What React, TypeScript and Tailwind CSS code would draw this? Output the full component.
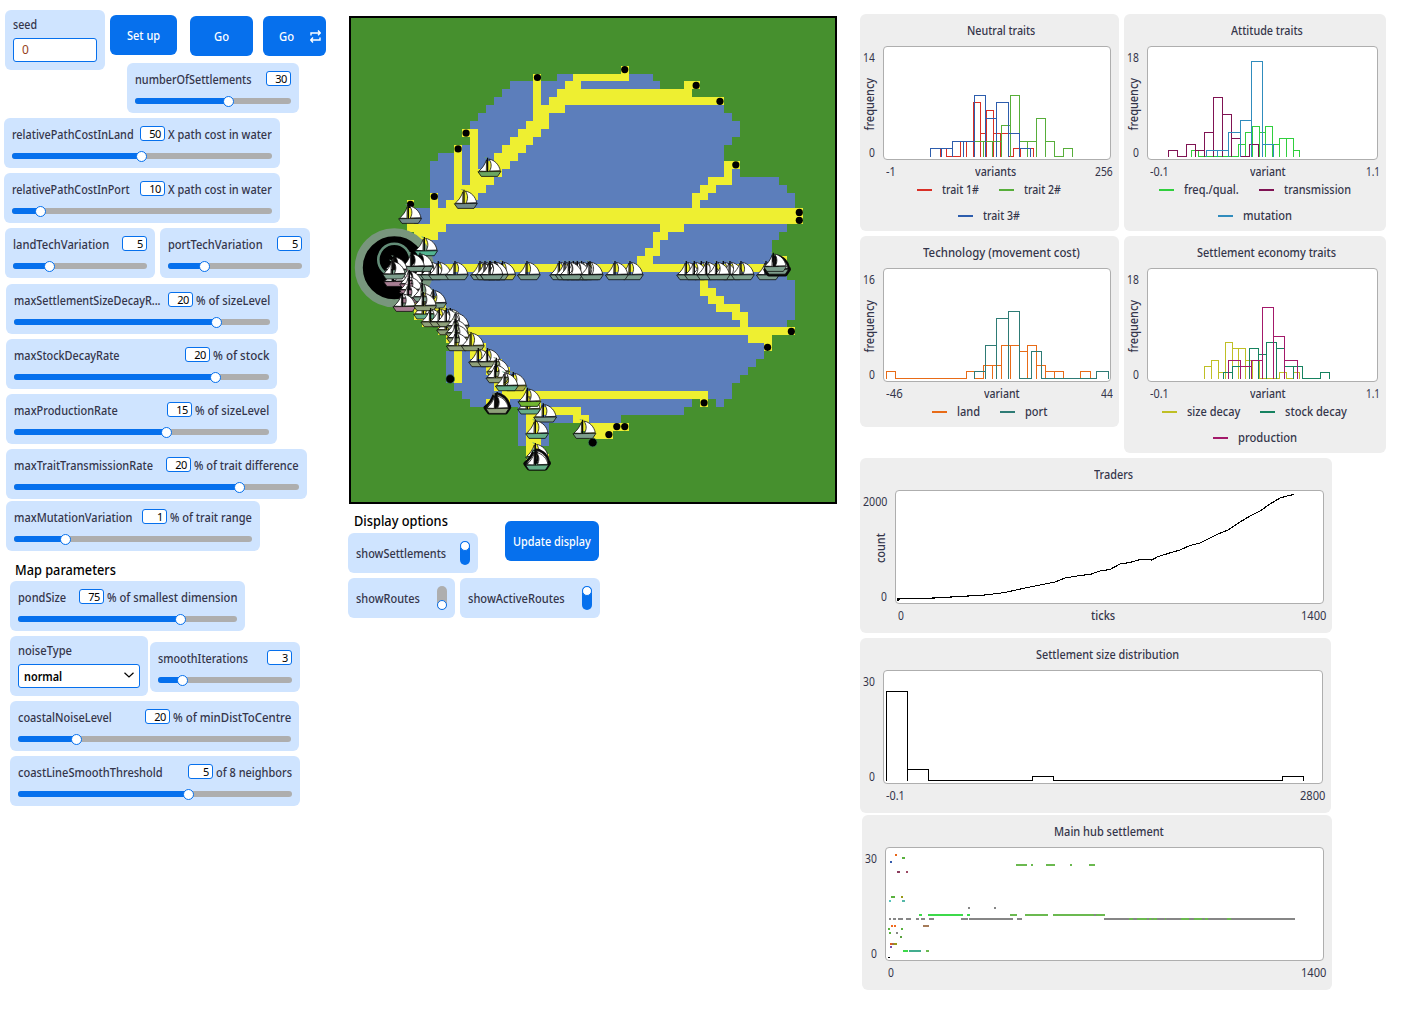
import { useLayoutEffect, useRef, type ReactNode } from "react";

/** Text stretched or squeezed horizontally so that it occupies a known width. */
function Fit({ w, children }: { w: number; children: string }) {
  const ref = useRef<HTMLSpanElement>(null);
  useLayoutEffect(() => {
    const el = ref.current!;
    el.style.transform = `scaleX(${w / el.offsetWidth})`;
  }, [w]);
  return (
    <span className="inline-block shrink-0 whitespace-nowrap" style={{ width: w }}>
      <span ref={ref} className="inline-block origin-left whitespace-nowrap">
        {children}
      </span>
    </span>
  );
}

function Slider(p: { box: string; label: string; lw: number; value: string; unit?: string; uw?: number; knob: number }) {
  return (
    <div className={`h-[50px] shrink-0 rounded-md bg-[#cfe4ff] px-2 pt-2 ${p.box}`}>
      <div className="flex h-[17px] items-start justify-between">
        <span className="pt-px"><Fit w={p.lw}>{p.label}</Fit></span>
        <div className="flex items-start gap-[3px]">
          <span className="h-[15px] w-[25px] shrink-0 rounded-[3px] border border-[#0670ed] bg-white pr-[3px] text-right text-[11px] leading-[14px] font-normal tracking-[-0.4px] text-black">
            {p.value}
          </span>
          {p.unit && <span className="pt-px"><Fit w={p.uw!}>{p.unit}</Fit></span>}
        </div>
      </div>
      <div className="relative mt-[10px] h-[6px] rounded-full bg-[#aeaeae]">
        <div className="h-full rounded-full bg-[#0670ed]" style={{ width: p.knob }} />
        <div className="absolute -top-[2px] size-[11px] rounded-full border border-[#0670ed] bg-white" style={{ left: p.knob - 6 }} />
      </div>
    </div>
  );
}

function Switch({ box, label, lw, on }: { box: string; label: string; lw: number; on: boolean }) {
  return (
    <div className={`flex h-10 items-center justify-between rounded-md bg-[#cfe4ff] px-2 ${box}`}>
      <span className="pt-[2px]"><Fit w={lw}>{label}</Fit></span>
      <span className={`flex h-6 w-[10px] rounded-full ${on ? "items-start bg-[#0670ed]" : "items-end bg-[#aeaeae]"}`}>
        <span className="size-[10px] rounded-full border border-[#0670ed] bg-white" />
      </span>
    </div>
  );
}

const button = "flex h-10 shrink-0 items-center justify-center rounded-md bg-[#0670ed] pt-[2px] text-white";

type Span = [row: number, from: number, to: number];
const water: Span[] = [
  [7, 26, 38], [8, 20, 39], [9, 19, 43], [10, 18, 47], [11, 17, 47], [12, 16, 48], [13, 15, 49], [14, 15, 49], [15, 15, 48],
  [16, 13, 47], [17, 11, 47], [18, 10, 47], [19, 10, 49], [20, 10, 54], [21, 10, 55], [22, 10, 56], [23, 10, 56],
  [24, 8, 57], [25, 8, 56], [26, 8, 55], [27, 8, 54], [28, 9, 53], [29, 9, 53], [30, 8, 53], [31, 8, 54], [32, 8, 55],
  [33, 8, 56], [34, 8, 56], [35, 8, 56], [36, 8, 56], [37, 9, 56], [38, 10, 55], [39, 12, 55], [40, 13, 53], [41, 13, 52],
  [42, 12, 52], [43, 12, 51], [44, 12, 50], [45, 12, 49], [46, 13, 48], [47, 14, 48], [48, 15, 43], [48, 46, 47],
  [49, 21, 42], [50, 21, 34], [51, 21, 25], [52, 21, 25], [53, 21, 25],
];
const routes: Span[] = [
  [6, 34, 35], [7, 23, 24], [7, 28, 35], [8, 23, 24], [8, 27, 29], [8, 42, 44], [9, 23, 24], [9, 26, 43], [10, 23, 24], [10, 25, 47],
  [11, 23, 27], [12, 23, 25], [13, 22, 25], [14, 14, 16], [14, 21, 24], [15, 15, 16], [15, 20, 23],
  [16, 13, 14], [16, 15, 16], [16, 19, 22], [17, 13, 14], [17, 15, 16], [17, 18, 21], [18, 13, 14], [18, 15, 16], [18, 17, 20],
  [18, 47, 49], [19, 13, 14], [19, 15, 19], [19, 47, 48], [20, 13, 14], [20, 15, 18], [20, 45, 48], [21, 13, 17], [21, 44, 46],
  [22, 10, 11], [22, 13, 16], [22, 43, 45], [23, 7, 8], [23, 10, 11], [23, 12, 15], [23, 43, 44],
  [24, 7, 8], [24, 10, 57], [25, 7, 8], [25, 10, 57], [26, 7, 12], [26, 39, 42], [27, 8, 11], [27, 38, 40], [28, 8, 10], [28, 38, 39], [29, 8, 9],
  [29, 37, 39], [30, 8, 9], [30, 36, 38], [30, 54, 55], [31, 7, 55], [32, 6, 8], [33, 44, 45], [34, 7, 10], [34, 44, 46], [35, 7, 11], [35, 45, 47], [36, 8, 12],
  [36, 46, 49], [37, 8, 12], [37, 48, 50], [38, 9, 14], [38, 49, 50], [39, 11, 56], [40, 12, 16], [40, 50, 53], [41, 13, 17], [41, 52, 53],
  [42, 13, 14], [42, 15, 18], [43, 13, 14], [43, 17, 19], [44, 13, 14], [44, 17, 20], [45, 13, 14], [45, 18, 21], [46, 18, 22],
  [47, 19, 45], [48, 17, 20], [48, 22, 24], [48, 44, 45], [49, 22, 29], [50, 22, 24], [50, 28, 30], [51, 22, 24], [51, 29, 35], [52, 22, 24], [52, 30, 33],
  [53, 22, 24], [54, 22, 24], [55, 22, 25],
];
const settlements: [number, number][] = [
  [23, 7], [34, 6], [43, 8], [46, 10], [14, 14], [13, 16], [10, 22], [7, 23], [48, 18], [56, 24], [56, 25],
  [55, 39], [52, 41], [44, 48], [33, 51], [34, 51], [32, 52],
];
const G = "#7d9e8c", T = "#65ad88", P = "#a87e93", O = "#8fa07a", S = "#70898a";
type BoatAt = [x: number, y: number, hull: string, outline?: number];
/** Boats moored almost on top of one another, read as one boat with a heavy outline. */
const moored = (x: number, y: number, hull: string): BoatAt[] => [[x, y, "#080808", 14], [x, y, hull]];
const boats: BoatAt[] = [
  [489.3, 176.7, "#6aa65f"], [465.7, 208.7, S], [410, 223.7, S], [426, 256, "#53b592"],
  ...[425, 432, 440, 456.7, 481.7, 486.7, 491.7, 496.7].map((x): BoatAt => [x, 280, G]),
  [504.3, 280, "#bfc64a"], [496.7, 280, G], [491.7, 280, G], [528.7, 280, G],
  ...[561, 566.7, 575, 583.3, 590, 579, 571, 591.7, 631.7, 616.7, 688, 703, 696, 708.3, 725, 731.7, 718.3, 742.7, 767.7].map((x): BoatAt => [x, 280, G]),
  [421.7, 271.7, G], [413.3, 271.7, G], [402, 286, P], [395, 286.7, P], [396, 275, G], [394, 279.3, G],
  [411, 289, P], [411, 295, P], [410, 303.3, P], [404.3, 311.7, P],
  [425, 319.3, T], [424, 302, G], [435, 308.3, G], [425, 311, O],
  [448, 335, O], [452, 327, O], [432.3, 327, O], [441, 327, O], [448, 327, O],
  [457.7, 331, O], [457, 338, O], [458, 343, O], [457.7, 351, O], [472.7, 351, O],
  [480, 367, O], [489.3, 367, O], [498, 376.7, O], [497.3, 383, O], [515, 391, "#a5a94b"], [506.7, 391, T],
  [499, 411, O], ...moored(497.3, 412.5, O), [497.3, 413.7, O],
  [529, 414.3, T], [529.3, 406.7, "#70b531"], [545, 422.3, G], [537, 438.7, T],
  [537, 462, T], ...moored(537, 468.500, T), [537, 470.3, T], [584.3, 438.7, G],
  ...moored(777, 274.500, G), [775, 271.700, G],
];

function Boat({ x, y, hull, outline = 2.3 }: { x: number; y: number; hull: string; outline?: number }) {
  return (
    <g transform={`translate(${x - 11.7} ${y - 20.3}) scale(.3333)`} stroke="#080808" strokeWidth={outline} strokeLinejoin="round">
      <path d="M20 2l8 1-2 4z" fill={hull} stroke="none" />
      <path d="M27 10C22 24 14 36 4 44L26 45Z" fill="#fff" />
      <path d="M34 8C52 11 65 26 68 43L36 44C43 31 42 19 34 8Z" fill="#fff" />
      <path d="M30 4V48" strokeWidth="4" />
      <path d="M1 46L70 45 60 60H11Z" fill={hull} />
    </g>
  );
}

function WorldView() {
  const u = 484 / 61;
  const cell = ([r, a, b]: Span, i: number) => {
    const x = Math.round(a * u), y = Math.round(r * u);
    return <rect key={i} x={x} y={y} width={Math.round(b * u) - x} height={Math.round((r + 1) * u) - y} />;
  };
  return (
    <svg className="block h-[488px] w-[488px] shrink-0 border-2 border-black bg-[#46902e]" viewBox="0 0 484 484">
      <g fill="#5c7ebb" shapeRendering="crispEdges">{water.map(cell)}</g>
      <g fill="#eeef31" shapeRendering="crispEdges">{routes.map(cell)}</g>
      {settlements.map(([c, r], i) => <circle key={i} cx={(c + 0.5) * u} cy={(r + 0.5) * u} r="3.6" />)}
      {[[99.2, 361], [241.7, 424.5]].map(([x, y]) => <circle key={x} cx={x} cy={y} r="4.4" stroke="#3c7c5c" strokeWidth=".7" />)}
      <circle cx="43.3" cy="249.7" r="35.5" fill="#000" stroke="#78967d" strokeWidth="8" />
      <circle cx="43.3" cy="241.7" r="16" fill="#000" stroke="#638d78" strokeWidth="2.6" />
      <g transform="translate(-351 -18)">{boats.map(([x, y, h, o], i) => <Boat key={i} x={x} y={y} hull={h} outline={o} />)}</g>
    </svg>
  );
}

type Bar = [number, number, number];
/** Outline histogram; every bar is [left, right, top] and stands on a shared base line. */
function Hist({ bars, color }: { bars: Bar[]; color: string }) {
  const d = bars.map(([a, b, t]) => (t >= 438 ? `M${a} 438.5H${b}` : `M${a} 440V${t}H${b}V440`)).join("");
  return <path d={d} stroke={color} fill="none" vectorEffect="non-scaling-stroke" transform="translate(.8 .8)" shapeRendering="crispEdges" />;
}

function Plot(p: {
  box: string; axis: string; plot: string; title: string; tw: number; view: string; yMax: string; yMaxW: number; yLabel?: string; yLabelW?: number;
  xMin: string; xMinW: number; xMax: string; xMaxW: number; xLabel?: string; xLabelW?: number; legend?: [string, number, string][][]; children: ReactNode;
}) {
  return (
    <div className={`shrink-0 rounded-md bg-[#eeeeee] ${p.box}`}>
      <div className="flex h-[163px]">
        <div className={`flex shrink-0 flex-col items-end pt-[36px] pr-2 ${p.axis}`}>
          <span className="font-normal"><Fit w={p.yMaxW}>{p.yMax}</Fit></span>
          <div className="flex h-[79px] w-3 items-center justify-center pb-[3px]">
            {p.yLabel && <span className="-rotate-90"><Fit w={p.yLabelW!}>{p.yLabel}</Fit></span>}
          </div>
          <span className="font-normal"><Fit w={6}>0</Fit></span>
        </div>
        <div className="min-w-0 flex-1">
          <div className="flex h-8 items-center justify-center pt-[2px]"><Fit w={p.tw}>{p.title}</Fit></div>
          <svg className={`block h-[114px] rounded-[4px] border border-[#aeaeae] bg-white ${p.plot}`} viewBox={p.view} preserveAspectRatio="none">
            {p.children}
          </svg>
          <div className={`flex h-6 items-center justify-between pl-[3px] ${p.plot}`}>
            <span className="font-normal"><Fit w={p.xMinW}>{p.xMin}</Fit></span>
            {p.xLabel && <Fit w={p.xLabelW!}>{p.xLabel}</Fit>}
            <span className="-mr-[2px] font-normal"><Fit w={p.xMaxW}>{p.xMax}</Fit></span>
          </div>
        </div>
      </div>
      {p.legend && (
        <div className="flex flex-col pr-px">
          {p.legend.map((row, i) => (
            <div key={i} className="flex h-[26px] items-center justify-center gap-5">
              {row.map(([name, w, color]) => (
                <span key={name} className="flex items-center gap-[10px]">
                  <span className="-mt-px h-[2px] w-[15px]" style={{ background: color }} />
                  <Fit w={w}>{name}</Fit>
                </span>
              ))}
            </div>
          ))}
        </div>
      )}
    </div>
  );
}

const hub: [x: number, y: number, w: number, color: string][] = [
  [117, 132, 6, "#e86516"], [138, 141, 9, "#59b13e"], [102, 153, 6, "#355bac"], [123, 183, 9, "#8c3d5d"], [150, 183, 6, "#9c4964"],
  [105, 258, 12, "#59b13e"], [135, 258, 6, "#999918"], [99, 270, 6, "#55c4bd"], [138, 270, 9, "#55b8a8"],
  [336, 291, 6, "#868686"], [414, 291, 6, "#868686"], [189, 312, 9, "#3cd94a"], [216, 312, 105, "#3cd94a"], [333, 312, 9, "#3cd94a"],
  [462, 312, 21, "#6bb950"], [507, 312, 69, "#6bb950"], [591, 312, 156, "#6bb950"], [714, 312, 6, "#868686"],
  [99, 324, 6, "#868686"], [111, 324, 9, "#868686"], [126, 324, 15, "#868686"], [150, 324, 15, "#868686"], [180, 324, 9, "#868686"], [195, 324, 12, "#868686"],
  [219, 324, 15, "#868686"], [315, 324, 21, "#868686"], [339, 324, 132, "#868686"], [483, 324, 15, "#868686"], [744, 324, 573, "#868686"],
  [819, 324, 12, "#6bb950"], [843, 324, 30, "#6bb950"], [879, 324, 9, "#6bb950"], [891, 324, 12, "#6bb950"], [927, 324, 3, "#6bb950"],
  [975, 324, 24, "#6bb950"], [1014, 324, 24, "#6bb950"], [1047, 324, 9, "#6bb950"], [1113, 324, 12, "#6bb950"],
  [105, 345, 6, "#f06a20"], [114, 345, 6, "#f06a20"], [201, 345, 18, "#a57b59"], [96, 354, 6, "#59b13e"], [135, 354, 6, "#59b13e"],
  [99, 366, 6, "#59b13e"], [120, 366, 6, "#868686"], [132, 378, 6, "#59a13e"], [102, 399, 12, "#df611c"], [108, 399, 6, "#a56a50"], [114, 399, 9, "#999918"],
  [102, 408, 6, "#7652ad"], [141, 420, 15, "#3cd94a"], [159, 420, 36, "#43ad8f"], [210, 420, 9, "#6bb950"], [96, 441, 6, "#000"],
  [480, 162, 33, "#6bb950"], [525, 162, 6, "#6bb950"], [570, 162, 27, "#6bb950"], [642, 162, 6, "#6bb950"], [699, 162, 18, "#6bb950"],
];

export default function App() {
  return (
    <main className="flex h-[1010px] w-[1406px] overflow-hidden bg-white font-['Noto_Sans',sans-serif] text-[12px] leading-[16px] font-medium text-[#34354a]">
      <section className="flex w-[349px] shrink-0 flex-col items-start pt-[10px] pl-1">
        <div className="flex items-start">
          <div className="ml-px h-[60px] w-[100px] rounded-md bg-[#cfe4ff] px-2 pt-[7px]">
            <Fit w={24}>seed</Fit>
            <div className="mt-[5px] h-6 w-[84px] rounded-[3px] border border-[#0670ed] bg-white pl-2 leading-[21px] font-normal text-[#963f20]">0</div>
          </div>
          <div className={`${button} mt-[5px] ml-[5px] w-[67px]`}><Fit w={33}>Set up</Fit></div>
          <div className={`${button} mt-[6px] ml-[13px] w-[63px]`}><Fit w={15}>Go</Fit></div>
          <div className={`${button} mt-[6px] ml-[10px] w-[63px] gap-4 pl-[10px]`}>
            <Fit w={15}>Go</Fit>
            <svg className="-mt-px h-[13px] w-[11px]" viewBox="0 0 11 13" fill="none" stroke="currentColor" strokeWidth="1.4">
              <path d="M1 5.500V3H10M8 .5L10.3 3 8 5.3M10 7.500V10H1M3 7.500L.7 10 3 12.500" />
            </svg>
          </div>
        </div>
        <Slider box="-mt-[7px] ml-[123px] w-[172px]" label="numberOfSettlements" lw={117} value="30" knob={94} />
        <Slider box="mt-[5px] w-[276px]" label="relativePathCostInLand" lw={122} value="50" unit="X path cost in water" uw={104} knob={130} />
        <Slider box="mt-[5px] w-[276px]" label="relativePathCostInPort" lw={118} value="10" unit="X path cost in water" uw={104} knob={29} />
        <div className="mt-[5px] ml-px flex gap-[5px]">
          <Slider box="w-[150px]" label="landTechVariation" lw={96} value="5" knob={37} />
          <Slider box="w-[150px]" label="portTechVariation" lw={95} value="5" knob={37} />
        </div>
        <Slider box="mt-[6px] ml-[2px] w-[272px]" label="maxSettlementSizeDecayR..." lw={147} value="20" unit="% of sizeLevel" uw={74} knob={203} />
        <Slider box="mt-[5px] ml-[2px] w-[271px]" label="maxStockDecayRate" lw={106} value="20" unit="% of stock" uw={56} knob={202} />
        <Slider box="mt-[5px] ml-[2px] w-[271px]" label="maxProductionRate" lw={104} value="15" unit="% of sizeLevel" uw={74} knob={153} />
        <Slider box="mt-[5px] ml-[2px] w-[301px]" label="maxTraitTransmissionRate" lw={139} value="20" unit="% of trait difference" uw={105} knob={226} />
        <Slider box="mt-[2px] ml-[2px] w-[254px]" label="maxMutationVariation" lw={118} value="1" unit="% of trait range" uw={82} knob={52} />
        <h2 className="mt-[8px] ml-[11px] h-[22px] text-[14px] leading-[21px] font-medium text-black"><Fit w={101}>Map parameters</Fit></h2>
        <Slider box="ml-[6px] w-[235px]" label="pondSize" lw={48} value="75" unit="% of smallest dimension" uw={130} knob={163} />
        <div className="mt-[5px] ml-[6px] flex items-start gap-[2px]">
          <div className="h-[60px] w-[138px] rounded-md bg-[#cfe4ff] px-2 pt-[7px]">
            <Fit w={54}>noiseType</Fit>
            <div className="mt-[5px] flex h-6 items-center justify-between rounded-[3px] border border-[#0670ed] bg-white px-[5px] pt-[2px] font-semibold text-black">
              <Fit w={38}>normal</Fit>
              <svg className="-mt-1 h-[6px] w-[10px]" viewBox="0 0 10 6" fill="none" stroke="currentColor" strokeWidth="1.2"><path d="M.5.7L5 5 9.500.7" /></svg>
            </div>
          </div>
          <Slider box="mt-[6px] w-[150px]" label="smoothIterations" lw={90} value="3" knob={25} />
        </div>
        <Slider box="mt-[5px] ml-[6px] w-[289px]" label="coastalNoiseLevel" lw={94} value="20" unit="% of minDistToCentre" uw={118} knob={59} />
        <Slider box="mt-[5px] ml-[6px] w-[290px]" label="coastLineSmoothThreshold" lw={145} value="5" unit="of 8 neighbors" uw={76} knob={171} />
      </section>

      <section className="w-[511px] shrink-0 pt-4">
        <WorldView />
        <div className="-ml-px flex">
          <div>
            <h2 className="mt-[6px] ml-[6px] h-[23px] text-[14px] leading-[22px] font-medium text-black"><Fit w={94}>Display options</Fit></h2>
            <Switch box="w-[130px]" label="showSettlements" lw={90} on />
          </div>
          <div className={`${button} mt-[17px] ml-[27px] w-[94px]`}><Fit w={78}>Update display</Fit></div>
        </div>
        <div className="mt-[5px] -ml-px flex gap-[5px]">
          <Switch box="w-[107px]" label="showRoutes" lw={64} on={false} />
          <Switch box="w-[140px]" label="showActiveRoutes" lw={97} on />
        </div>
      </section>

      <section className="flex w-[546px] flex-col items-start pt-[14px]">
        <div className="flex gap-[5px]">
          <Plot box="h-[217px] w-[259px]" axis="w-[23px]" plot="w-[228px]" title="Neutral traits" tw={68} view="884 47 226 112" yMax="14" yMaxW={12} yLabel="frequency" yLabelW={53}
            xMin="-1" xMinW={10} xMax="256" xMaxW={18} xLabel="variants" xLabelW={41}
            legend={[[["trait 1#", 37, "#d92f26"], ["trait 2#", 37, "#57ae3a"]], [["trait 3#", 37, "#2d5dad"]]]}>
            <g transform="translate(856 10) scale(.33333)">
              <Hist color="#d92f26" bars={[[254, 271, 415], [271, 313, 438], [313, 331, 394], [331, 352, 394], [352, 373, 277], [373, 391, 370], [391, 412, 301], [412, 433, 370], [433, 457, 370], [457, 472, 438], [472, 493, 415], [493, 514, 415], [514, 532, 415]]} />
              <Hist color="#57ae3a" bars={[[355, 382, 394], [382, 409, 394], [409, 436, 394], [436, 463, 346], [463, 490, 256], [490, 514, 394], [514, 541, 394], [541, 568, 325], [568, 595, 394], [595, 622, 438], [622, 649, 415]]} />
              <Hist color="#2d5dad" bars={[[223, 256, 415], [256, 289, 415], [289, 322, 394], [322, 355, 394], [355, 388, 256], [388, 421, 325], [421, 457, 277], [457, 490, 370], [490, 523, 415]]} />
            </g>
          </Plot>
          <Plot box="h-[217px] w-[262px]" axis="w-[23px]" plot="w-[231px]" title="Attitude traits" tw={72} view="1148 47 229 112" yMax="18" yMaxW={12} yLabel="frequency" yLabelW={53}
            xMin="-0.1" xMinW={19} xMax="1.1" xMaxW={14} xLabel="variant" xLabelW={36}
            legend={[[["freq./qual.", 55, "#30cf3d"], ["transmission", 67, "#801353"]], [["mutation", 49, "#308cbd"]]]}>
            <g transform="translate(1120 10) scale(.33333)">
              <Hist color="#30cf3d" bars={[[214, 235, 421], [235, 355, 438], [355, 376, 403], [376, 397, 367], [397, 418, 349], [418, 436, 367], [436, 457, 349], [457, 478, 403], [478, 499, 385], [499, 520, 385], [520, 538, 421]]} />
              <Hist color="#801353" bars={[[145, 172, 421], [172, 199, 438], [199, 226, 403], [226, 253, 421], [253, 280, 367], [280, 307, 262], [307, 334, 313], [334, 361, 385], [361, 388, 438], [388, 415, 403]]} />
              <Hist color="#308cbd" bars={[[259, 292, 421], [292, 325, 421], [325, 361, 367], [361, 394, 331], [394, 427, 154], [427, 460, 403]]} />
            </g>
          </Plot>
        </div>
        <div className="mt-[5px] flex items-start gap-[5px]">
          <Plot box="h-[191px] w-[259px]" axis="w-[23px]" plot="w-[228px]" title="Technology (movement cost)" tw={157} view="884 269 226 112" yMax="16" yMaxW={12} yLabel="frequency" yLabelW={53}
            xMin="-46" xMinW={17} xMax="44" xMaxW={12} xLabel="variant" xLabelW={36} legend={[[["land", 23, "#e86b17"], ["port", 22, "#2e7b75"]]]}>
            <g transform="translate(856 232) scale(.3413 .33333)">
              <Hist color="#e86b17" bars={[[89, 116, 418], [116, 323, 438], [323, 347, 418], [347, 374, 438], [374, 400, 400], [400, 426, 400], [426, 452, 340], [452, 479, 340], [479, 503, 358], [503, 529, 340], [529, 555, 400], [555, 582, 418], [582, 608, 418], [608, 658, 438], [658, 685, 418]]} />
              <Hist color="#2e7b75" bars={[[347, 380, 418], [380, 411, 340], [411, 446, 259], [446, 479, 238], [479, 512, 438], [512, 543, 358], [543, 704, 438], [704, 738, 418]]} />
            </g>
          </Plot>
          <Plot box="h-[217px] w-[262px]" axis="w-[23px]" plot="w-[231px]" title="Settlement economy traits" tw={139} view="1148 269 229 112" yMax="18" yMaxW={12} yLabel="frequency" yLabelW={53}
            xMin="-0.1" xMinW={19} xMax="1.1" xMaxW={14} xLabel="variant" xLabelW={36}
            legend={[[["size decay", 53, "#bfbf25"], ["stock decay", 62, "#168260"]], [["production", 59, "#a3196a"]]]}>
            <g transform="translate(856 232) scale(.3413 .33333)">
              <Hist color="#bfbf25" bars={[[1021, 1041, 403], [1041, 1062, 385], [1062, 1083, 421], [1083, 1101, 331], [1101, 1121, 349], [1121, 1141, 349], [1141, 1162, 385], [1162, 1182, 385], [1182, 1241, 438], [1241, 1262, 421], [1262, 1282, 438], [1282, 1300, 421]]} />
              <Hist color="#168260" bars={[[1075, 1101, 421], [1101, 1127, 403], [1127, 1153, 403], [1153, 1179, 349], [1179, 1203, 367], [1203, 1230, 331], [1230, 1256, 349], [1256, 1282, 403], [1282, 1308, 403], [1308, 1361, 438], [1361, 1388, 421]]} />
              <Hist color="#a3196a" bars={[[1091, 1127, 385], [1127, 1159, 403], [1159, 1191, 385], [1191, 1223, 226], [1223, 1256, 313], [1256, 1292, 385]]} />
            </g>
          </Plot>
        </div>
        <Plot box="mt-[5px] h-[175px] w-[472px]" axis="w-[35px]" plot="w-[429px]" title="Traders" tw={39} view="896 491 427 112" yMax="2000" yMaxW={24} yLabel="count" yLabelW={30}
          xMin="0" xMinW={6} xMax="1400" xMaxW={25} xLabel="ticks" xLabelW={24}>
          <path fill="none" stroke="#000" strokeWidth="1.1" shapeRendering="crispEdges" d="M898 601V599L934 598 960 596.500 985 595 1005 592.500 1025 588 1045 584 1055 582 1065 578 1080 575.500 1090 574.500 1100 571 1110 569.500 1120 564 1130 562.500 1140 559.500 1152 560 1157 557 1168 553.500 1180 550 1190 545.500 1200 543 1210 538 1218 534 1228 530 1240 522 1250 516 1260 511 1270 504 1280 498 1287 496 1294 494.500" />
        </Plot>
        <Plot box="mt-[5px] h-[175px] w-[471px]" axis="w-[23px]" plot="w-[440px]" title="Settlement size distribution" tw={143} view="884 671 438 112" yMax="30" yMaxW={12}
          xMin="-0.1" xMinW={19} xMax="2800" xMaxW={25}>
          <path fill="none" stroke="#000" shapeRendering="crispEdges" d="M886.500 781V691.500H907.500V781M907.500 769.500H928.500V780.500H1032.500V776.500H1053.500V780.500H1282.500V776.500H1303.500V781" />
        </Plot>
        <Plot box="mt-[2px] ml-[2px] h-[175px] w-[470px]" axis="w-[23px]" plot="w-[439px]" title="Main hub settlement" tw={110} view="886 848 437 112" yMax="30" yMaxW={12}
          xMin="0" xMinW={6} xMax="1400" xMaxW={25}>
          <g transform="translate(856 810) scale(.33333)" shapeRendering="crispEdges">
            {hub.map(([x, y, w, c], i) => <rect key={i} x={x} y={y} width={w} height={c === "#000" ? 3 : 6} fill={c} />)}
          </g>
        </Plot>
      </section>
    </main>
  );
}
